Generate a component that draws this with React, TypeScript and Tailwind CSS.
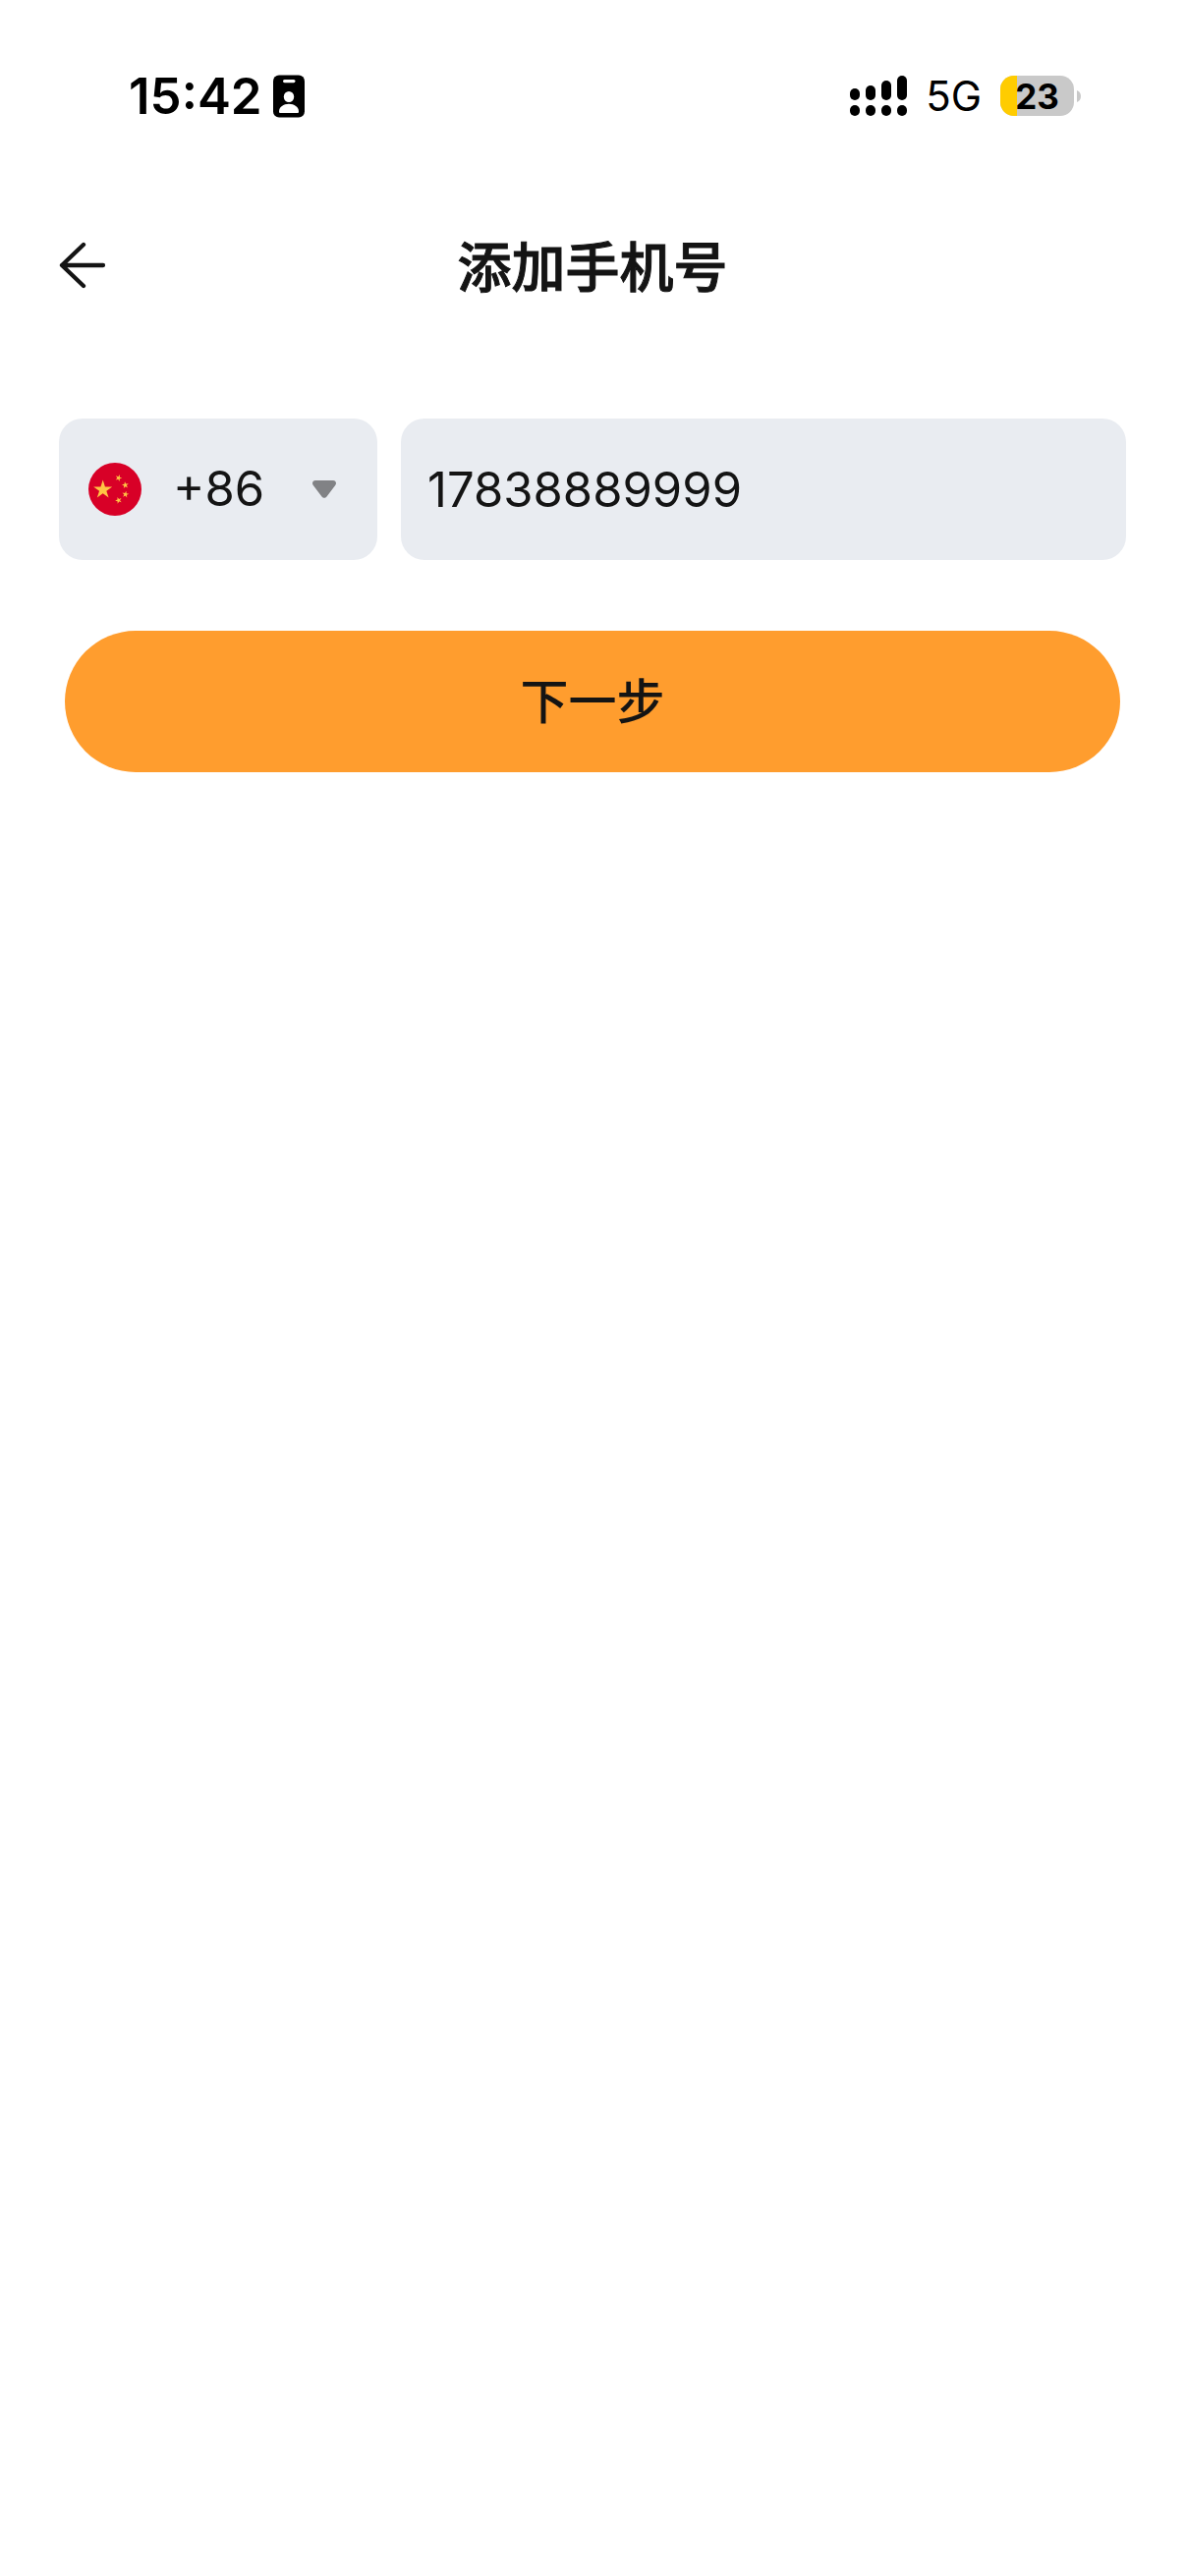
import { useState } from "react";

function BadgeIcon() {
  return (
    <svg className="h-11 w-8" viewBox="0 0 32 44" aria-hidden="true">
      <rect x="0" y="0.5" width="32" height="43" rx="6" fill="#000" />
      <rect x="10" y="5" width="12.500" height="3.200" rx="1.600" fill="#fff" />
      <ellipse cx="16" cy="22.500" rx="5.200" ry="5.600" fill="#fff" />
      <path d="M6 37.500C6 33 10.500 29.800 16 29.800S26 33 26 37.500C26 38.500 25.500 39 24.600 39H7.400C6.500 39 6 38.500 6 37.500Z" fill="#fff" />
    </svg>
  );
}

function SignalIcon() {
  const bars = [
    { x: 0, top: 13 },
    { x: 16, top: 10 },
    { x: 32, top: 5 },
    { x: 48, top: 0 },
  ];
  return (
    <svg className="h-[42px] w-[58px]" viewBox="0 0 58 42" role="img" aria-label="Signal">
      {bars.map((b) => (
        <g key={b.x}>
          <rect x={b.x} y={b.top} width="10" height={25 - b.top} rx="5" />
          <rect x={b.x} y="30" width="10" height="11" rx="5" />
        </g>
      ))}
    </svg>
  );
}

function Battery({ level }: { level: number }) {
  return (
    <div className="flex items-center gap-[3px]">
      <div className="relative flex h-[41px] w-[75px] items-center justify-center overflow-hidden rounded-[14px] bg-[#c9c9c9]">
        <span className="absolute inset-y-0 left-0 bg-[#ffcc00]" style={{ width: `${level}%` }} />
        <span className="relative text-[35px] leading-10 font-bold">{level}</span>
      </div>
      <svg className="h-3 w-1" viewBox="0 0 4 12" aria-hidden="true">
        <path d="M0 0C2.600 1 4 3.300 4 6S2.600 11 0 12Z" fill="#c9c9c9" />
      </svg>
    </div>
  );
}

function StatusBar() {
  return (
    <div className="flex h-[195px] items-center justify-between pr-[106px] pl-[131px] text-black">
      <div className="flex items-center gap-[11px]">
        <span className="text-[51px] leading-[60px] font-semibold">15:42</span>
        <BadgeIcon />
      </div>
      <div className="flex items-center gap-[19px]">
        <SignalIcon />
        <span className="text-[42px] leading-[60px]">5G</span>
        <Battery level={23} />
      </div>
    </div>
  );
}

function ChinaFlag() {
  const star = "M0 -10L2.245 -3.090H9.511L3.633 1.180L5.878 8.090L0 3.820L-5.878 8.090L-3.633 1.180L-9.511 -3.090H-2.245Z";
  return (
    <svg className="size-[54px] shrink-0" viewBox="0 0 54 54" aria-hidden="true">
      <circle cx="27" cy="27" r="27" fill="#d80027" />
      <g fill="#ffc544">
        <path d={star} transform="translate(14.700 27.500) scale(1)" />
        <path d={star} transform="translate(30.700 15.500) rotate(20) scale(0.360)" />
        <path d={star} transform="translate(37.500 22.800) rotate(-8) scale(0.360)" />
        <path d={star} transform="translate(37.700 32.200) rotate(10) scale(0.360)" />
        <path d={star} transform="translate(30.700 38.300) rotate(-20) scale(0.360)" />
      </g>
    </svg>
  );
}

export default function App() {
  const [phone, setPhone] = useState("17838889999");
  return (
    <div className="min-h-screen bg-white font-['Inter','Noto_Sans_CJK_SC',sans-serif] text-[#141414]">
      <StatusBar />
      <header className="grid h-[149px] grid-cols-[1fr_auto_1fr] items-center px-[60px]">
        <button type="button" aria-label="返回" className="justify-self-start">
          <svg
            className="size-12"
            viewBox="0 0 48 48"
            fill="none"
            stroke="currentColor"
            strokeWidth="4.300"
            strokeLinecap="round"
            strokeLinejoin="round"
            aria-hidden="true"
          >
            <path d="M25 3L3 24L25 45M3 24H45" />
          </svg>
        </button>
        <h1 className="pt-1 text-[55px] leading-[80px] font-medium [-webkit-text-stroke:1px_currentColor]">添加手机号</h1>
      </header>
      <form className="px-[60px] pt-[82px]" onSubmit={(e) => e.preventDefault()}>
        <div className="flex gap-6">
          <div className="flex h-36 w-[324px] shrink-0 items-center rounded-3xl bg-[#e9ecf1] pr-[42px] pl-[30px]">
            <ChinaFlag />
            <select
              aria-label="国家/地区代码"
              className="ml-8 min-w-0 flex-1 appearance-none bg-transparent text-[49px] leading-[60px] outline-none"
            >
              <option>+86</option>
            </select>
            <svg className="h-[18px] w-6 shrink-0" viewBox="0 0 24 18" aria-hidden="true">
              <path d="M3 0H21C23.800 0 24.900 3 23.200 5L14.500 16.500C13.200 18.300 10.800 18.300 9.500 16.500L0.800 5C-0.900 3 0.200 0 3 0Z" fill="#818285" />
            </svg>
          </div>
          <input
            type="tel"
            aria-label="手机号"
            value={phone}
            onChange={(e) => setPhone(e.target.value)}
            className="h-36 min-w-0 flex-1 rounded-3xl bg-[#e9ecf1] px-[27px] text-[49px] leading-[60px] outline-none"
          />
        </div>
        <div className="px-1.5 pt-[72px]">
          <button
            type="submit"
            className="h-36 w-full rounded-full bg-[#ff9d2e] pt-0.5 text-[49px] leading-[60px] font-medium"
          >
            下一步
          </button>
        </div>
      </form>
    </div>
  );
}
